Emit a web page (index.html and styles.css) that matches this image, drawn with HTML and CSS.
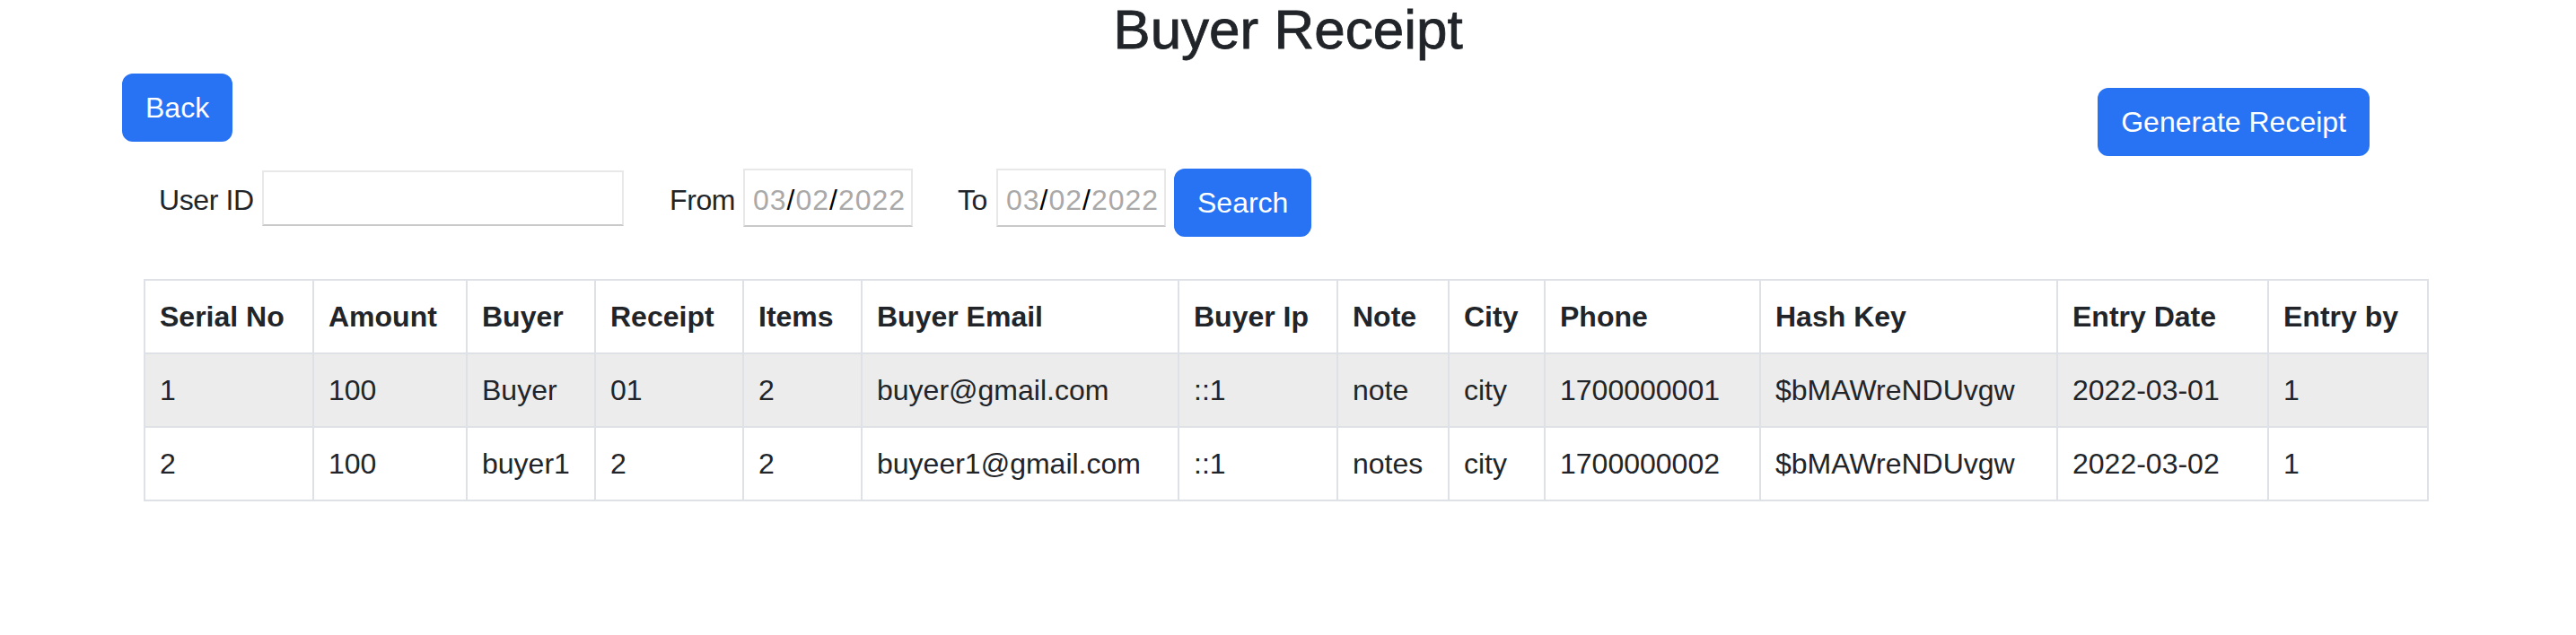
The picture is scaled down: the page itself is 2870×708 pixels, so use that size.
FILE: index.html
```html
<!DOCTYPE html>
<html lang="en">
<head>
<meta charset="utf-8">
<title>Buyer Receipt</title>
<link rel="stylesheet" href="styles.css">
</head>
<body>
<h2 class="title">Buyer Receipt</h2>

<div class="toolbar">
  <button class="btn btn-back" type="button">Back</button>
  <button class="btn btn-generate" type="button">Generate Receipt</button>
</div>

<form class="filter">
  <label class="filter-label lbl-user">User ID</label>
  <input class="text-input" type="text">
  <label class="filter-label lbl-from">From</label>
  <div class="date-field"><span class="dim">03</span><span class="sep">/</span><span class="dim">02</span><span class="sep">/</span><span class="dim">2022</span></div>
  <label class="filter-label lbl-to">To</label>
  <div class="date-field"><span class="dim">03</span><span class="sep">/</span><span class="dim">02</span><span class="sep">/</span><span class="dim">2022</span></div>
  <button class="btn btn-search" type="button">Search</button>
</form>

<div class="table-wrap">
  <table class="receipt-table">
    <colgroup>
      <col class="c-serial"><col class="c-amount"><col class="c-buyer"><col class="c-receipt"><col class="c-items"><col class="c-email"><col class="c-ip"><col class="c-note"><col class="c-city"><col class="c-phone"><col class="c-hash"><col class="c-date"><col class="c-by">
    </colgroup>
    <thead>
      <tr>
        <th>Serial No</th><th>Amount</th><th>Buyer</th><th>Receipt</th><th>Items</th><th>Buyer Email</th><th>Buyer Ip</th><th>Note</th><th>City</th><th>Phone</th><th>Hash Key</th><th>Entry Date</th><th>Entry by</th>
      </tr>
    </thead>
    <tbody>
      <tr class="striped">
        <td>1</td><td>100</td><td>Buyer</td><td>01</td><td>2</td><td>buyer@gmail.com</td><td>::1</td><td>note</td><td>city</td><td>1700000001</td><td>$bMAWreNDUvgw</td><td>2022-03-01</td><td>1</td>
      </tr>
      <tr>
        <td>2</td><td>100</td><td>buyer1</td><td>2</td><td>2</td><td>buyeer1@gmail.com</td><td>::1</td><td>notes</td><td>city</td><td>1700000002</td><td>$bMAWreNDUvgw</td><td>2022-03-02</td><td>1</td>
      </tr>
    </tbody>
  </table>
</div>
</body>
</html>
```

FILE: styles.css
```css
html, body {
  margin: 0;
  padding: 0;
  background: #ffffff;
}

body {
  font-family: "Liberation Sans", Arial, sans-serif;
  font-size: 32px;
  line-height: 48px;
  color: #212529;
  width: 2870px;
}

.title {
  margin: 0;
  font-size: 62px;
  line-height: 66px;
  font-weight: 500;
  text-align: center;
  color: #212529;
  -webkit-text-stroke: 0.8px #212529;
}

.toolbar {
  display: flex;
  justify-content: space-between;
  align-items: flex-start;
  padding: 0 230px 0 136px;
}

.btn {
  box-sizing: border-box;
  height: 76px;
  padding: 12px 24px;
  border: 2px solid #2773f4;
  border-radius: 12px;
  background: #2773f4;
  color: #ffffff;
  font-family: "Liberation Sans", Arial, sans-serif;
  font-size: 32px;
  line-height: 48px;
  cursor: pointer;
}

.btn-back {
  margin-top: 16px;
}

.btn-generate {
  margin-top: 32px;
}

.filter {
  display: flex;
  align-items: flex-start;
  margin: 14px 0 0;
  padding-left: 177px;
}

.filter-label {
  flex: none;
  margin: 11px 10px 0 0;
  line-height: 48px;
  letter-spacing: -0.4px;
  white-space: nowrap;
}

.lbl-user {
  width: 105px;
}

.lbl-from {
  width: 71px;
  margin-left: 51px;
  margin-right: 11px;
}

.lbl-to {
  width: 33px;
  margin-left: 50px;
}

.text-input {
  flex: none;
  box-sizing: border-box;
  width: 403px;
  height: 62px;
  margin: 2px 0 0;
  padding: 0 8px;
  border: 2px solid #e8e8e8;
  border-bottom-color: #c9c9c9;
  border-radius: 0;
  background: #ffffff;
  font-family: "Liberation Sans", Arial, sans-serif;
  font-size: 32px;
  outline: none;
}

.date-field {
  flex: none;
  box-sizing: border-box;
  width: 189px;
  height: 65px;
  padding: 9px 0 0 9px;
  border: 2px solid #e8e8e8;
  border-bottom-color: #c9c9c9;
  background: #ffffff;
  line-height: 48px;
  letter-spacing: 1px;
  white-space: nowrap;
}

.date-field .dim {
  color: #a9a9a9;
}

.date-field .sep {
  color: #000000;
}

.btn-search {
  margin-left: 9px;
}

.table-wrap {
  margin-top: 47px;
  padding-left: 160px;
}

.receipt-table {
  width: 2544px;
  table-layout: fixed;
  border-collapse: collapse;
  color: #212529;
}

.receipt-table th,
.receipt-table td {
  padding: 16px;
  border: 2px solid #dee2e6;
  text-align: left;
  vertical-align: top;
  line-height: 48px;
  white-space: nowrap;
}

.receipt-table th {
  font-weight: 700;
}

.receipt-table .striped td {
  background: #ececec;
}

.c-serial { width: 188px; }
.c-amount { width: 171px; }
.c-buyer { width: 143px; }
.c-receipt { width: 165px; }
.c-items { width: 132px; }
.c-email { width: 353px; }
.c-ip { width: 177px; }
.c-note { width: 124px; }
.c-city { width: 107px; }
.c-phone { width: 240px; }
.c-hash { width: 331px; }
.c-date { width: 235px; }
.c-by { width: 178px; }
```
